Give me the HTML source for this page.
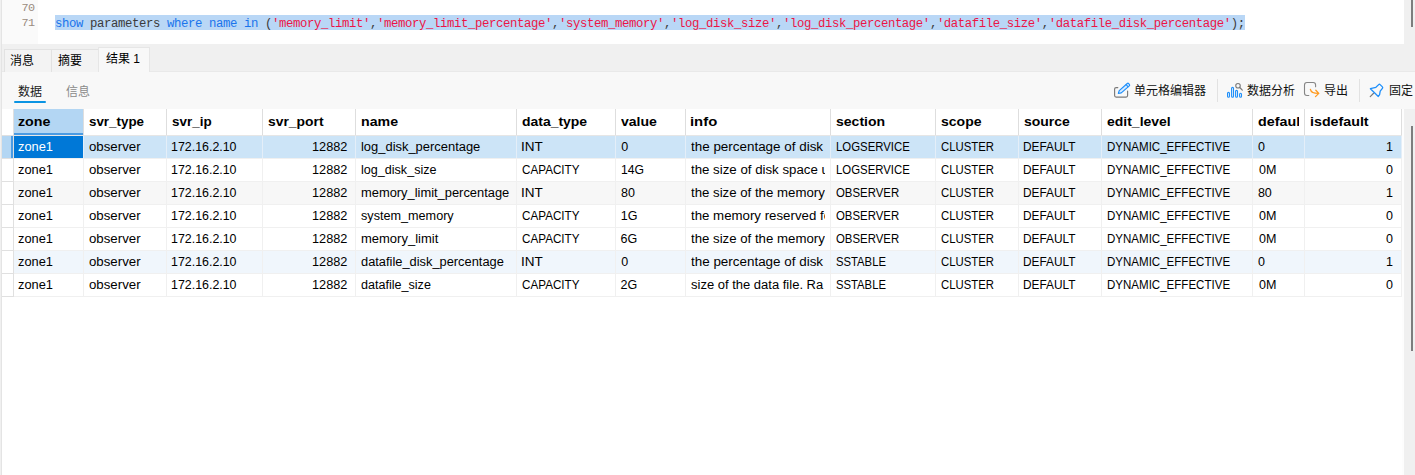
<!DOCTYPE html>
<html lang="zh-CN"><head><meta charset="utf-8"><title>Query result</title>
<style>
html,body{margin:0;padding:0}
body{--cfs:12.5px;--hfs:13px;width:1415px;height:475px;overflow:hidden;background:#fff;position:relative;font-family:"Liberation Sans","Noto Sans CJK SC",sans-serif;font-size:12px;color:#000}
div{box-sizing:border-box}
.abs{position:absolute}
.lb0{position:absolute;left:0;top:0;width:1px;height:475px;background:#f0f0f0}
.lb1{position:absolute;left:1px;top:0;width:1px;height:475px;background:#e4e4e4}
/* editor */
.gutter{position:absolute;left:2px;top:0;width:36px;height:44px;background:#fafafa}
.ln{position:absolute;left:0;width:32.6px;text-align:right;font-family:"Liberation Mono",monospace;font-size:11.8px;letter-spacing:-0.48px;color:#9a8c80;height:15px;line-height:15px}
.code{position:absolute;left:55px;top:15px;height:15px;width:1190px;background:#b9d7f6;overflow:hidden}
.code pre{position:absolute;left:0;top:2px;margin:0;height:15px;line-height:15px;font-family:"Liberation Mono",monospace;font-size:12.3px;letter-spacing:-0.3812px;white-space:pre;color:#3b3b3b}
.code .k{color:#1a74ec}
.code .s{color:#ec1446}
.edr{position:absolute;left:1404px;top:0;width:11px;height:44px;background:#f0f0f0}
.thumb1{position:absolute;left:1411px;top:0;width:2px;height:27px;background:#7d7d7d}
/* tab bar */
.tabbar{position:absolute;left:2px;top:44px;width:1413px;height:27px;background:#f0f0f0}
.tab{position:absolute;top:49px;height:23px;border:1px solid #e2e2e2;border-bottom:none;background:#f3f3f3;font-size:12px;line-height:20px}
.tab span{position:absolute;white-space:nowrap;top:1px}
.tab.act{top:47px;height:25px;background:#f8f8f8;border-color:#e6e6e6}
.panel{position:absolute;left:2px;top:71px;width:1413px;height:38px;background:#f8f8f8;border-top:1px solid #e9e9e9}
.sub{position:absolute;font-size:12px;line-height:16px;white-space:nowrap}
.uline{position:absolute;left:14px;top:101px;width:32px;height:2px;background:#0a94e3;border-radius:1px}
.tb{position:absolute;font-size:12px;line-height:16px;white-space:nowrap;color:#111;top:83px}
.sep{position:absolute;top:79px;width:1px;height:23px;background:#e2e2e2}
/* grid */
.grid{position:absolute;left:0;top:0;width:1415px;height:475px;pointer-events:none}
.hrow{position:absolute;left:0;top:109px;width:1402px;height:26px}
.hc{position:absolute;top:0;height:26px;font-weight:bold;font-size:var(--hfs);line-height:26px;white-space:nowrap}
.hc.sel{background:#b3d6f3;border-bottom:2px solid #4a9be3}
.hc i,.row .c i{position:absolute;left:0;top:0;height:100%;overflow:hidden;font-style:normal}
.hc span,.row .c span{position:absolute;top:0;transform-origin:0 0;display:inline-block}
.row{position:absolute;left:14px;width:1388px;height:22px}
.row .c{position:absolute;top:0;height:22px;line-height:22px;font-size:var(--cfs);white-space:nowrap}
.c.cur{background:#0078d7;color:#fff}
.ind0{position:absolute;left:2px;top:136px;width:9px;height:22px;background:#b3d6f3}
.ind1{position:absolute;left:11px;top:136px;width:2px;height:22px;background:#4a9be3}
.vl{position:absolute;top:136px;width:1px;background:#f0f0f0}
.vl.h{top:109px;height:27px;background:#dedede}
.vl.s{background:#e4eef8}
.hl{position:absolute;left:14px;height:1px;width:1388px;background:#f0f0f0}
.hli{position:absolute;left:2px;height:1px;width:11px;background:#e0e0e0}
.tright{position:absolute;left:1404px;top:109px;width:11px;height:366px;background:#f0f0f0}
.tright2{position:absolute;left:1402px;top:109px;width:2px;height:366px;background:#fdfdfd}
.thumb2{position:absolute;left:1411px;top:126px;width:2px;height:225px;background:#7d7d7d}

.hl.first{background:#e6e6e6}

</style></head><body>
<div class="lb0"></div><div class="lb1"></div>
<div class="gutter"><div class="ln" style="top:1px">70</div><div class="ln" style="top:16px">71</div></div>
<div class="code"><pre><span class="k">show</span> parameters <span class="k">where</span> <span class="k">name</span> <span class="k">in</span> (<span class="s">'memory_limit'</span>,<span class="s">'memory_limit_percentage'</span>,<span class="s">'system_memory'</span>,<span class="s">'log_disk_size'</span>,<span class="s">'log_disk_percentage'</span>,<span class="s">'datafile_size'</span>,<span class="s">'datafile_disk_percentage'</span>);</pre></div>
<div class="edr"></div><div class="thumb1"></div>
<div class="tabbar"></div>
<div class="panel"></div>
<div class="tab" style="left:4px;width:48px"><span style="left:5px">消息</span></div>
<div class="tab" style="left:51px;width:48px"><span style="left:6px">摘要</span></div>
<div class="tab act" style="left:98px;width:52px"><span style="left:7px;top:1px">结果 1</span></div>
<div class="sub" style="left:18px;top:84px;color:#1a1a1a">数据</div>
<div class="sub" style="left:66px;top:84px;color:#8a8a8a">信息</div>
<div class="uline"></div>
<svg class="abs" style="left:1108px;top:76px" width="30" height="28" viewBox="0 0 30 28" fill="none" stroke-linecap="round" stroke-linejoin="round"><path d="M9.8 11.6H8.1Q6.6 11.6 6.6 13.1V19.6Q6.6 21.1 8.1 21.1H18.1Q19.6 21.1 19.6 19.6V15" stroke="#7a7a7a" stroke-width="1.15"/><g transform="translate(10.3 17.5) rotate(-41.5)"><path d="M0 0L2.6 -1.55H13.3Q14.3 -1.55 14.3 -0.55V0.55Q14.3 1.55 13.3 1.55H2.6Z" stroke="#1e8ffa" stroke-width="1.15" fill="#d6eaff"/><path d="M11.8 -1.5V1.5" stroke="#1e8ffa" stroke-width="1"/></g></svg>
<svg class="abs" style="left:1222px;top:76px" width="30" height="28" viewBox="0 0 30 28" fill="none"><rect x="5.55" y="16.4" width="1.9" height="4.9" rx="0.95" stroke="#1e8ffa" stroke-width="1.1"/><rect x="9.6" y="11.4" width="1.9" height="9.9" rx="0.95" stroke="#1e8ffa" stroke-width="1.1"/><rect x="13.6" y="14.4" width="1.9" height="6.9" rx="0.95" stroke="#1e8ffa" stroke-width="1.1"/><rect x="17.6" y="17.3" width="1.9" height="4" rx="0.95" stroke="#1e8ffa" stroke-width="1.1"/><circle cx="16" cy="9.7" r="2.25" stroke="#7a7a7a" stroke-width="1.1"/><path d="M17.8 11.5L20.3 14.1" stroke="#7a7a7a" stroke-width="1.2" stroke-linecap="round"/></svg>
<svg class="abs" style="left:1298px;top:76px" width="30" height="28" viewBox="0 0 30 28" fill="none" stroke-linecap="round" stroke-linejoin="round"><path d="M10.8 19.5H8.9Q6.5 19.5 6.5 17.1V8.9Q6.5 6.5 8.9 6.5H15.2Q17.6 6.5 17.6 8.9V10.8" stroke="#858585" stroke-width="1.1"/><path d="M12.4 13.3Q13.2 17.4 20.3 17.4M17.8 14.3L20.8 17.4L17.5 20.6" stroke="#ff9a1f" stroke-width="1.3"/></svg>
<svg class="abs" style="left:1362px;top:76px" width="30" height="28" viewBox="0 0 30 28" fill="none" stroke-linecap="round" stroke-linejoin="round"><path d="M8.25 20.6L11.6 17.3" stroke="#7a7a7a" stroke-width="1.2"/><path d="M8.4 12.7L13.9 11.3L16.7 8.6Q17.4 7.9 18.1 8.6L20.4 10.9Q21.1 11.6 20.4 12.4L18.2 15.2L17.6 18.6L16.3 20.5Z" stroke="#1e8ffa" stroke-width="1.3"/></svg>
<div class="tb" style="left:1134px">单元格编辑器</div>
<div class="sep" style="left:1217px"></div>
<div class="tb" style="left:1247px">数据分析</div>
<div class="tb" style="left:1324px">导出</div>
<div class="sep" style="left:1359px"></div>
<div class="tb" style="left:1389px">固定</div>
<div class="grid">
<div class="hrow">
<div class="hc sel" style="left:14px;width:69px"><i style="width:64px"><span style="left:4.45px;transform:scaleX(1.0957)">zone</span></i></div>
<div class="hc" style="left:84px;width:82px"><i style="width:77px"><span style="left:5.19px;transform:scaleX(1.0286)">svr_type</span></i></div>
<div class="hc" style="left:167px;width:95px"><i style="width:90px"><span style="left:4.88px;transform:scaleX(1.0336)">svr_ip</span></i></div>
<div class="hc" style="left:263px;width:92px"><i style="width:87px"><span style="left:5.27px;transform:scaleX(1.0673)">svr_port</span></i></div>
<div class="hc" style="left:356px;width:160px"><i style="width:155px"><span style="left:4.78px;transform:scaleX(1.0901)">name</span></i></div>
<div class="hc" style="left:517px;width:98px"><i style="width:93px"><span style="left:5.16px;transform:scaleX(1.0728)">data_type</span></i></div>
<div class="hc" style="left:616px;width:69px"><i style="width:64px"><span style="left:4.93px;transform:scaleX(1.0800)">value</span></i></div>
<div class="hc" style="left:686px;width:144px"><i style="width:139px"><span style="left:4.36px;transform:scaleX(1.1416)">info</span></i></div>
<div class="hc" style="left:831px;width:104px"><i style="width:99px"><span style="left:4.96px;transform:scaleX(1.0802)">section</span></i></div>
<div class="hc" style="left:936px;width:82px"><i style="width:77px"><span style="left:5.06px;transform:scaleX(1.0795)">scope</span></i></div>
<div class="hc" style="left:1019px;width:82px"><i style="width:77px"><span style="left:4.76px;transform:scaleX(1.0754)">source</span></i></div>
<div class="hc" style="left:1102px;width:150px"><i style="width:145px"><span style="left:4.76px;transform:scaleX(1.0753)">edit_level</span></i></div>
<div class="hc" style="left:1253px;width:51px"><i style="width:46px"><span style="left:5.25px;transform:scaleX(1.1000)">default_value</span></i></div>
<div class="hc" style="left:1305px;width:96px"><i style="width:91px"><span style="left:4.80px;transform:scaleX(1.0967)">isdefault</span></i></div>
</div>
<div class="row r1" style="top:136px;background:#cce4f7">
<div class="c cur" style="left:0px;width:69px"><i style="width:64px"><span style="left:4.39px;transform:scaleX(1.0273)">zone1</span></i></div>
<div class="c" style="left:70px;width:82px"><i style="width:77px"><span style="left:5.17px;transform:scaleX(1.0604)">observer</span></i></div>
<div class="c" style="left:153px;width:95px"><i style="width:90px"><span style="left:4.41px;transform:scaleX(0.9922)">172.16.2.10</span></i></div>
<div class="c" style="left:249px;width:92px"><i style="width:87px"><span style="left:48.68px;transform:scaleX(1.0195)">12882</span></i></div>
<div class="c" style="left:342px;width:160px"><i style="width:155px"><span style="left:4.82px;transform:scaleX(1.0342)">log_disk_percentage</span></i></div>
<div class="c" style="left:503px;width:98px"><i style="width:93px"><span style="left:4.25px;transform:scaleX(1.0811)">INT</span></i></div>
<div class="c" style="left:602px;width:69px"><i style="width:64px"><span style="left:5.20px;transform:scaleX(1.0000)">0</span></i></div>
<div class="c" style="left:672px;width:144px"><i style="width:139px"><span style="left:5.13px;transform:scaleX(1.0737)">the percentage of disk space</span></i></div>
<div class="c" style="left:817px;width:104px"><i style="width:99px"><span style="left:4.89px;transform:scaleX(0.9107)">LOGSERVICE</span></i></div>
<div class="c" style="left:922px;width:82px"><i style="width:77px"><span style="left:4.62px;transform:scaleX(0.9070)">CLUSTER</span></i></div>
<div class="c" style="left:1005px;width:82px"><i style="width:77px"><span style="left:4.45px;transform:scaleX(0.9481)">DEFAULT</span></i></div>
<div class="c" style="left:1088px;width:150px"><i style="width:145px"><span style="left:4.58px;transform:scaleX(0.9230)">DYNAMIC_EFFECTIVE</span></i></div>
<div class="c" style="left:1239px;width:51px"><i style="width:46px"><span style="left:4.95px;transform:scaleX(1.0000)">0</span></i></div>
<div class="c" style="left:1291px;width:96px"><i style="width:91px"><span style="left:81.03px;transform:scaleX(1.0000)">1</span></i></div>
</div>
<div class="row r2" style="top:159px;background:#ffffff">
<div class="c" style="left:0px;width:69px"><i style="width:64px"><span style="left:4.39px;transform:scaleX(1.0273)">zone1</span></i></div>
<div class="c" style="left:70px;width:82px"><i style="width:77px"><span style="left:5.17px;transform:scaleX(1.0604)">observer</span></i></div>
<div class="c" style="left:153px;width:95px"><i style="width:90px"><span style="left:4.41px;transform:scaleX(0.9922)">172.16.2.10</span></i></div>
<div class="c" style="left:249px;width:92px"><i style="width:87px"><span style="left:48.68px;transform:scaleX(1.0195)">12882</span></i></div>
<div class="c" style="left:342px;width:160px"><i style="width:155px"><span style="left:4.85px;transform:scaleX(1.0061)">log_disk_size</span></i></div>
<div class="c" style="left:503px;width:98px"><i style="width:93px"><span style="left:4.50px;transform:scaleX(0.9339)">CAPACITY</span></i></div>
<div class="c" style="left:602px;width:69px"><i style="width:64px"><span style="left:4.93px;transform:scaleX(0.9747)">14G</span></i></div>
<div class="c" style="left:672px;width:144px"><i style="width:139px"><span style="left:5.13px;transform:scaleX(1.0611)">the size of disk space used</span></i></div>
<div class="c" style="left:817px;width:104px"><i style="width:99px"><span style="left:4.89px;transform:scaleX(0.9107)">LOGSERVICE</span></i></div>
<div class="c" style="left:922px;width:82px"><i style="width:77px"><span style="left:4.62px;transform:scaleX(0.9070)">CLUSTER</span></i></div>
<div class="c" style="left:1005px;width:82px"><i style="width:77px"><span style="left:4.45px;transform:scaleX(0.9481)">DEFAULT</span></i></div>
<div class="c" style="left:1088px;width:150px"><i style="width:145px"><span style="left:4.58px;transform:scaleX(0.9230)">DYNAMIC_EFFECTIVE</span></i></div>
<div class="c" style="left:1239px;width:51px"><i style="width:46px"><span style="left:6.03px;transform:scaleX(1.0000)">0M</span></i></div>
<div class="c" style="left:1291px;width:96px"><i style="width:91px"><span style="left:81.05px;transform:scaleX(1.0000)">0</span></i></div>
</div>
<div class="row r3" style="top:182px;background:#f7f7f7">
<div class="c" style="left:0px;width:69px"><i style="width:64px"><span style="left:4.39px;transform:scaleX(1.0273)">zone1</span></i></div>
<div class="c" style="left:70px;width:82px"><i style="width:77px"><span style="left:5.17px;transform:scaleX(1.0604)">observer</span></i></div>
<div class="c" style="left:153px;width:95px"><i style="width:90px"><span style="left:4.41px;transform:scaleX(0.9922)">172.16.2.10</span></i></div>
<div class="c" style="left:249px;width:92px"><i style="width:87px"><span style="left:48.68px;transform:scaleX(1.0195)">12882</span></i></div>
<div class="c" style="left:342px;width:160px"><i style="width:155px"><span style="left:4.83px;transform:scaleX(1.0309)">memory_limit_percentage</span></i></div>
<div class="c" style="left:503px;width:98px"><i style="width:93px"><span style="left:4.25px;transform:scaleX(1.0811)">INT</span></i></div>
<div class="c" style="left:602px;width:69px"><i style="width:64px"><span style="left:4.95px;transform:scaleX(1.0000)">80</span></i></div>
<div class="c" style="left:672px;width:144px"><i style="width:139px"><span style="left:5.14px;transform:scaleX(1.0579)">the size of the memory reserved</span></i></div>
<div class="c" style="left:817px;width:104px"><i style="width:99px"><span style="left:5.34px;transform:scaleX(0.9118)">OBSERVER</span></i></div>
<div class="c" style="left:922px;width:82px"><i style="width:77px"><span style="left:4.62px;transform:scaleX(0.9070)">CLUSTER</span></i></div>
<div class="c" style="left:1005px;width:82px"><i style="width:77px"><span style="left:4.45px;transform:scaleX(0.9481)">DEFAULT</span></i></div>
<div class="c" style="left:1088px;width:150px"><i style="width:145px"><span style="left:4.58px;transform:scaleX(0.9230)">DYNAMIC_EFFECTIVE</span></i></div>
<div class="c" style="left:1239px;width:51px"><i style="width:46px"><span style="left:4.90px;transform:scaleX(1.0000)">80</span></i></div>
<div class="c" style="left:1291px;width:96px"><i style="width:91px"><span style="left:81.03px;transform:scaleX(1.0000)">1</span></i></div>
</div>
<div class="row r4" style="top:205px;background:#ffffff">
<div class="c" style="left:0px;width:69px"><i style="width:64px"><span style="left:4.39px;transform:scaleX(1.0273)">zone1</span></i></div>
<div class="c" style="left:70px;width:82px"><i style="width:77px"><span style="left:5.17px;transform:scaleX(1.0604)">observer</span></i></div>
<div class="c" style="left:153px;width:95px"><i style="width:90px"><span style="left:4.41px;transform:scaleX(0.9922)">172.16.2.10</span></i></div>
<div class="c" style="left:249px;width:92px"><i style="width:87px"><span style="left:48.68px;transform:scaleX(1.0195)">12882</span></i></div>
<div class="c" style="left:342px;width:160px"><i style="width:155px"><span style="left:4.99px;transform:scaleX(1.0110)">system_memory</span></i></div>
<div class="c" style="left:503px;width:98px"><i style="width:93px"><span style="left:4.50px;transform:scaleX(0.9339)">CAPACITY</span></i></div>
<div class="c" style="left:602px;width:69px"><i style="width:64px"><span style="left:4.72px;transform:scaleX(1.0000)">1G</span></i></div>
<div class="c" style="left:672px;width:144px"><i style="width:139px"><span style="left:5.13px;transform:scaleX(1.0607)">the memory reserved for</span></i></div>
<div class="c" style="left:817px;width:104px"><i style="width:99px"><span style="left:5.34px;transform:scaleX(0.9118)">OBSERVER</span></i></div>
<div class="c" style="left:922px;width:82px"><i style="width:77px"><span style="left:4.62px;transform:scaleX(0.9070)">CLUSTER</span></i></div>
<div class="c" style="left:1005px;width:82px"><i style="width:77px"><span style="left:4.45px;transform:scaleX(0.9481)">DEFAULT</span></i></div>
<div class="c" style="left:1088px;width:150px"><i style="width:145px"><span style="left:4.58px;transform:scaleX(0.9230)">DYNAMIC_EFFECTIVE</span></i></div>
<div class="c" style="left:1239px;width:51px"><i style="width:46px"><span style="left:6.03px;transform:scaleX(1.0000)">0M</span></i></div>
<div class="c" style="left:1291px;width:96px"><i style="width:91px"><span style="left:81.05px;transform:scaleX(1.0000)">0</span></i></div>
</div>
<div class="row r5" style="top:228px;background:#ffffff">
<div class="c" style="left:0px;width:69px"><i style="width:64px"><span style="left:4.39px;transform:scaleX(1.0273)">zone1</span></i></div>
<div class="c" style="left:70px;width:82px"><i style="width:77px"><span style="left:5.17px;transform:scaleX(1.0604)">observer</span></i></div>
<div class="c" style="left:153px;width:95px"><i style="width:90px"><span style="left:4.41px;transform:scaleX(0.9922)">172.16.2.10</span></i></div>
<div class="c" style="left:249px;width:92px"><i style="width:87px"><span style="left:48.68px;transform:scaleX(1.0195)">12882</span></i></div>
<div class="c" style="left:342px;width:160px"><i style="width:155px"><span style="left:4.72px;transform:scaleX(1.0395)">memory_limit</span></i></div>
<div class="c" style="left:503px;width:98px"><i style="width:93px"><span style="left:4.50px;transform:scaleX(0.9339)">CAPACITY</span></i></div>
<div class="c" style="left:602px;width:69px"><i style="width:64px"><span style="left:4.60px;transform:scaleX(1.0000)">6G</span></i></div>
<div class="c" style="left:672px;width:144px"><i style="width:139px"><span style="left:5.14px;transform:scaleX(1.0579)">the size of the memory reserved</span></i></div>
<div class="c" style="left:817px;width:104px"><i style="width:99px"><span style="left:5.34px;transform:scaleX(0.9118)">OBSERVER</span></i></div>
<div class="c" style="left:922px;width:82px"><i style="width:77px"><span style="left:4.62px;transform:scaleX(0.9070)">CLUSTER</span></i></div>
<div class="c" style="left:1005px;width:82px"><i style="width:77px"><span style="left:4.45px;transform:scaleX(0.9481)">DEFAULT</span></i></div>
<div class="c" style="left:1088px;width:150px"><i style="width:145px"><span style="left:4.58px;transform:scaleX(0.9230)">DYNAMIC_EFFECTIVE</span></i></div>
<div class="c" style="left:1239px;width:51px"><i style="width:46px"><span style="left:6.03px;transform:scaleX(1.0000)">0M</span></i></div>
<div class="c" style="left:1291px;width:96px"><i style="width:91px"><span style="left:81.05px;transform:scaleX(1.0000)">0</span></i></div>
</div>
<div class="row r6" style="top:251px;background:#f0f6fc">
<div class="c" style="left:0px;width:69px"><i style="width:64px"><span style="left:4.39px;transform:scaleX(1.0273)">zone1</span></i></div>
<div class="c" style="left:70px;width:82px"><i style="width:77px"><span style="left:5.17px;transform:scaleX(1.0604)">observer</span></i></div>
<div class="c" style="left:153px;width:95px"><i style="width:90px"><span style="left:4.41px;transform:scaleX(0.9922)">172.16.2.10</span></i></div>
<div class="c" style="left:249px;width:92px"><i style="width:87px"><span style="left:48.68px;transform:scaleX(1.0195)">12882</span></i></div>
<div class="c" style="left:342px;width:160px"><i style="width:155px"><span style="left:4.99px;transform:scaleX(1.0275)">datafile_disk_percentage</span></i></div>
<div class="c" style="left:503px;width:98px"><i style="width:93px"><span style="left:4.25px;transform:scaleX(1.0811)">INT</span></i></div>
<div class="c" style="left:602px;width:69px"><i style="width:64px"><span style="left:5.20px;transform:scaleX(1.0000)">0</span></i></div>
<div class="c" style="left:672px;width:144px"><i style="width:139px"><span style="left:5.13px;transform:scaleX(1.0737)">the percentage of disk space</span></i></div>
<div class="c" style="left:817px;width:104px"><i style="width:99px"><span style="left:5.02px;transform:scaleX(0.9019)">SSTABLE</span></i></div>
<div class="c" style="left:922px;width:82px"><i style="width:77px"><span style="left:4.62px;transform:scaleX(0.9070)">CLUSTER</span></i></div>
<div class="c" style="left:1005px;width:82px"><i style="width:77px"><span style="left:4.45px;transform:scaleX(0.9481)">DEFAULT</span></i></div>
<div class="c" style="left:1088px;width:150px"><i style="width:145px"><span style="left:4.58px;transform:scaleX(0.9230)">DYNAMIC_EFFECTIVE</span></i></div>
<div class="c" style="left:1239px;width:51px"><i style="width:46px"><span style="left:4.95px;transform:scaleX(1.0000)">0</span></i></div>
<div class="c" style="left:1291px;width:96px"><i style="width:91px"><span style="left:81.03px;transform:scaleX(1.0000)">1</span></i></div>
</div>
<div class="row r7" style="top:274px;background:#ffffff">
<div class="c" style="left:0px;width:69px"><i style="width:64px"><span style="left:4.39px;transform:scaleX(1.0273)">zone1</span></i></div>
<div class="c" style="left:70px;width:82px"><i style="width:77px"><span style="left:5.17px;transform:scaleX(1.0604)">observer</span></i></div>
<div class="c" style="left:153px;width:95px"><i style="width:90px"><span style="left:4.41px;transform:scaleX(0.9922)">172.16.2.10</span></i></div>
<div class="c" style="left:249px;width:92px"><i style="width:87px"><span style="left:48.68px;transform:scaleX(1.0195)">12882</span></i></div>
<div class="c" style="left:342px;width:160px"><i style="width:155px"><span style="left:5.00px;transform:scaleX(1.0058)">datafile_size</span></i></div>
<div class="c" style="left:503px;width:98px"><i style="width:93px"><span style="left:4.50px;transform:scaleX(0.9339)">CAPACITY</span></i></div>
<div class="c" style="left:602px;width:69px"><i style="width:64px"><span style="left:4.60px;transform:scaleX(1.0000)">2G</span></i></div>
<div class="c" style="left:672px;width:144px"><i style="width:139px"><span style="left:5.08px;transform:scaleX(1.0398)">size of the data file. Ra</span></i></div>
<div class="c" style="left:817px;width:104px"><i style="width:99px"><span style="left:5.02px;transform:scaleX(0.9019)">SSTABLE</span></i></div>
<div class="c" style="left:922px;width:82px"><i style="width:77px"><span style="left:4.62px;transform:scaleX(0.9070)">CLUSTER</span></i></div>
<div class="c" style="left:1005px;width:82px"><i style="width:77px"><span style="left:4.45px;transform:scaleX(0.9481)">DEFAULT</span></i></div>
<div class="c" style="left:1088px;width:150px"><i style="width:145px"><span style="left:4.58px;transform:scaleX(0.9230)">DYNAMIC_EFFECTIVE</span></i></div>
<div class="c" style="left:1239px;width:51px"><i style="width:46px"><span style="left:6.03px;transform:scaleX(1.0000)">0M</span></i></div>
<div class="c" style="left:1291px;width:96px"><i style="width:91px"><span style="left:81.05px;transform:scaleX(1.0000)">0</span></i></div>
</div>
<div class="ind0"></div><div class="ind1"></div>
<div class="vl" style="left:83px;height:161px"></div>
<div class="vl h" style="left:83px"></div>
<div class="vl s" style="left:83px;top:136px;height:22px"></div>
<div class="vl" style="left:166px;height:161px"></div>
<div class="vl h" style="left:166px"></div>
<div class="vl s" style="left:166px;top:136px;height:22px"></div>
<div class="vl" style="left:262px;height:161px"></div>
<div class="vl h" style="left:262px"></div>
<div class="vl s" style="left:262px;top:136px;height:22px"></div>
<div class="vl" style="left:355px;height:161px"></div>
<div class="vl h" style="left:355px"></div>
<div class="vl s" style="left:355px;top:136px;height:22px"></div>
<div class="vl" style="left:516px;height:161px"></div>
<div class="vl h" style="left:516px"></div>
<div class="vl s" style="left:516px;top:136px;height:22px"></div>
<div class="vl" style="left:615px;height:161px"></div>
<div class="vl h" style="left:615px"></div>
<div class="vl s" style="left:615px;top:136px;height:22px"></div>
<div class="vl" style="left:685px;height:161px"></div>
<div class="vl h" style="left:685px"></div>
<div class="vl s" style="left:685px;top:136px;height:22px"></div>
<div class="vl" style="left:830px;height:161px"></div>
<div class="vl h" style="left:830px"></div>
<div class="vl s" style="left:830px;top:136px;height:22px"></div>
<div class="vl" style="left:935px;height:161px"></div>
<div class="vl h" style="left:935px"></div>
<div class="vl s" style="left:935px;top:136px;height:22px"></div>
<div class="vl" style="left:1018px;height:161px"></div>
<div class="vl h" style="left:1018px"></div>
<div class="vl s" style="left:1018px;top:136px;height:22px"></div>
<div class="vl" style="left:1101px;height:161px"></div>
<div class="vl h" style="left:1101px"></div>
<div class="vl s" style="left:1101px;top:136px;height:22px"></div>
<div class="vl" style="left:1252px;height:161px"></div>
<div class="vl h" style="left:1252px"></div>
<div class="vl s" style="left:1252px;top:136px;height:22px"></div>
<div class="vl" style="left:1304px;height:161px"></div>
<div class="vl h" style="left:1304px"></div>
<div class="vl s" style="left:1304px;top:136px;height:22px"></div>
<div class="vl" style="left:1401px;height:161px"></div>
<div class="vl h" style="left:1401px"></div>
<div class="vl s" style="left:1401px;top:136px;height:22px"></div>
<div class="vl" style="left:13px;top:109px;height:188px;background:#e0e0e0"></div>
<div class="hl first" style="top:135px"></div><div class="hli" style="top:135px"></div>
<div class="hl" style="top:158px"></div><div class="hli" style="top:158px"></div>
<div class="hl" style="top:181px"></div><div class="hli" style="top:181px"></div>
<div class="hl" style="top:204px"></div><div class="hli" style="top:204px"></div>
<div class="hl" style="top:227px"></div><div class="hli" style="top:227px"></div>
<div class="hl" style="top:250px"></div><div class="hli" style="top:250px"></div>
<div class="hl" style="top:273px"></div><div class="hli" style="top:273px"></div>
<div class="hl" style="top:296px"></div><div class="hli" style="top:296px"></div>
</div>
<div class="tright"></div><div class="tright2"></div><div class="thumb2"></div>
</body></html>
